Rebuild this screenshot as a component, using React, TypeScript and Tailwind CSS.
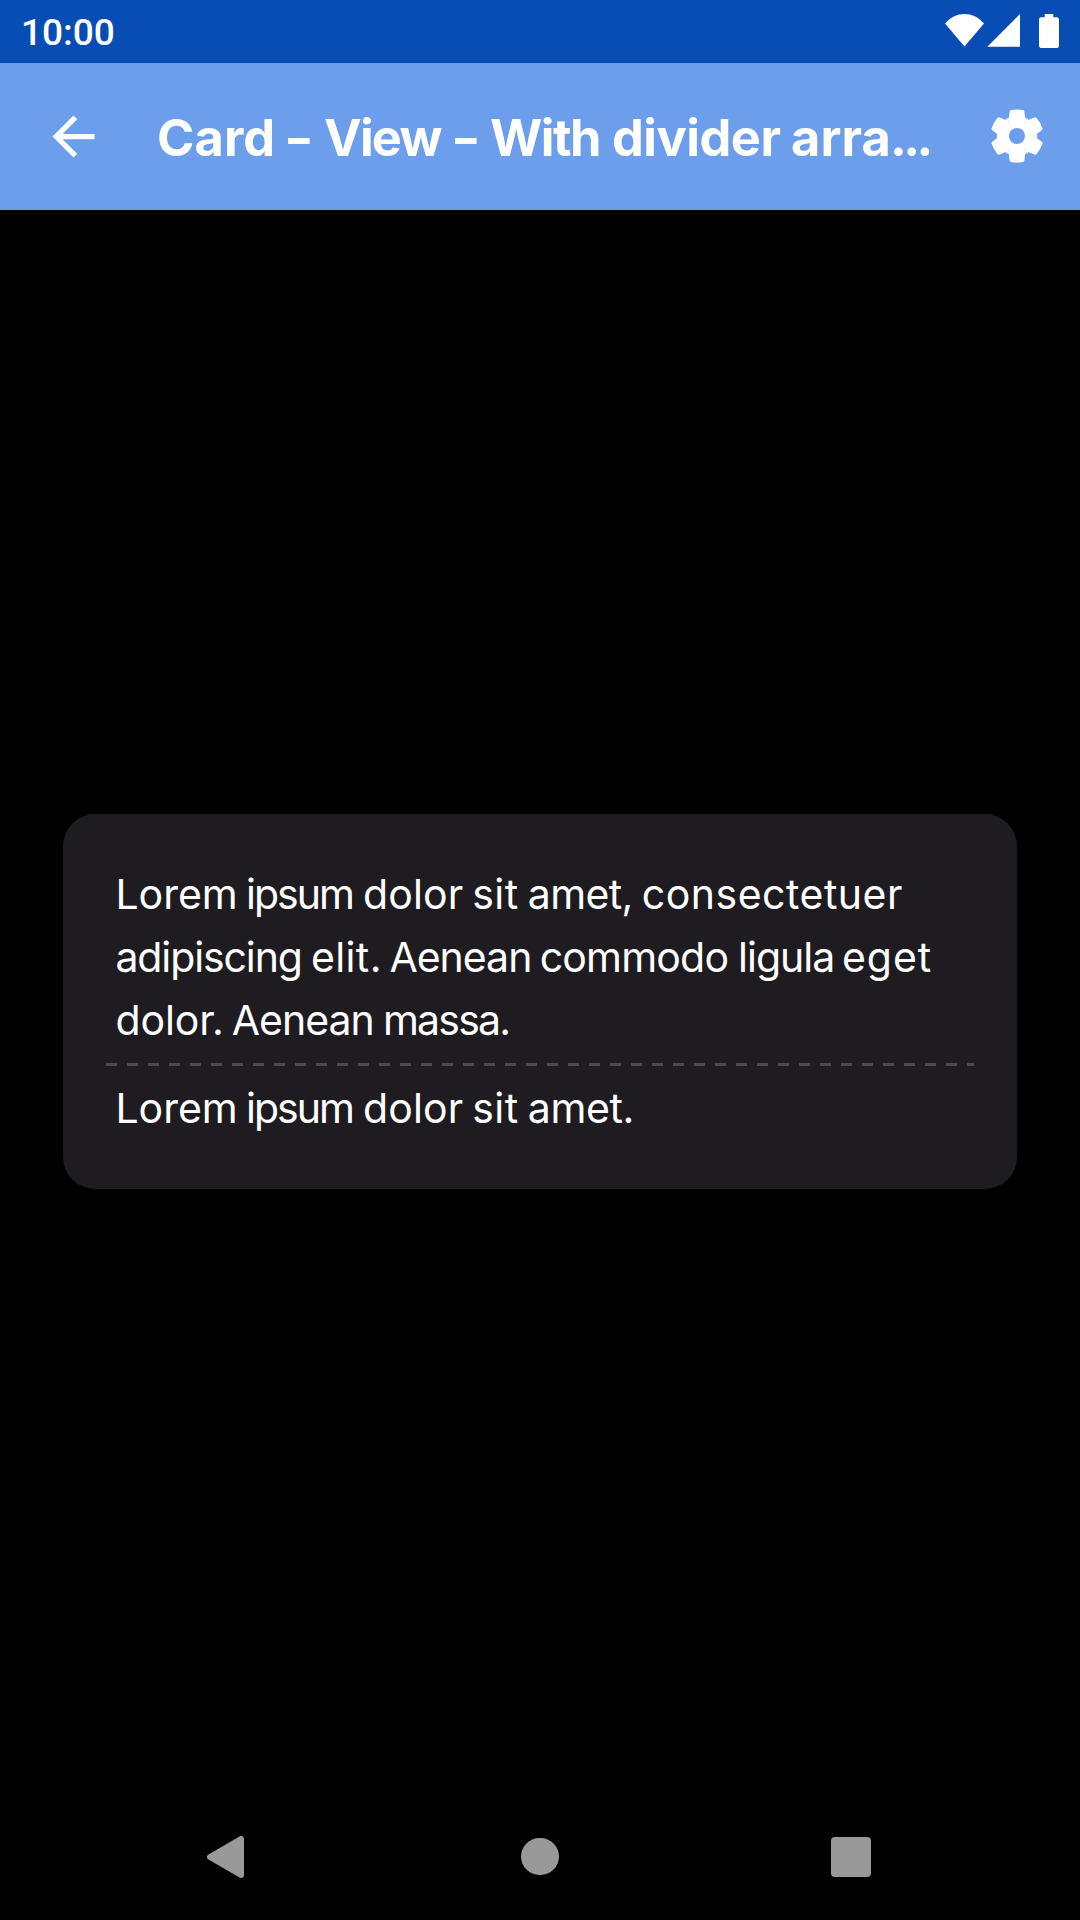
function StatusBar() {
  return (
    <div className="flex h-[63px] items-center justify-between bg-[#074db3] pl-[21px] pr-5">
      <span className="relative top-px font-['Roboto'] text-[37px] font-medium leading-none text-white">10:00</span>
      <svg className="h-[63px] w-[120px]" viewBox="940 0 120 63" fill="#fff" aria-hidden="true">
        <path d="M964.5 46.6 945 23.4A25.1 25.1 0 0 1 984 23.4Z" />
        <path d="M1020 14V46.8H987.3Z" />
        <path d="M1044.7 14h8.6v3.2h3.5a2.2 2.2 0 0 1 2.2 2.2V45.8a2.2 2.2 0 0 1-2.2 2.2H1041.2a2.2 2.2 0 0 1-2.2-2.2V19.4a2.2 2.2 0 0 1 2.2-2.2h3.5Z" />
      </svg>
    </div>
  );
}

const gearTooth =
  "M0 0L-31 -53.7C-27.5 -51.5 -24.6 -53 -24 -57L-22.3 -73Q-21.8 -77 -18 -77.7Q0 -81 18 -77.7Q21.8 -77 22.3 -73L24 -57C24.6 -53 27.5 -51.5 31 -53.7Z";

function GearIcon() {
  return (
    <svg className="h-[54px] w-[54px]" viewBox="-81 -81 162 162" fill="#fff" aria-hidden="true">
      {[0, 60, 120, 180, 240, 300].map((a) => (
        <path key={a} d={gearTooth} transform={`rotate(${a})`} />
      ))}
      <circle r="40" />
      <circle r="24" fill="#6c9eeb" />
    </svg>
  );
}

function AppBar() {
  return (
    <header className="flex h-[147px] items-center bg-[#6c9eeb] pl-[42px] pr-[36.5px]">
      <svg className="h-[63px] w-[63px]" viewBox="0 0 24 24" fill="#fff" aria-hidden="true">
        <path d="M20 11H7.83l5.59-5.59L12 4l-8 8 8 8 1.41-1.41L7.83 13H20v-2z" />
      </svg>
      <h1 className="ml-[52px] mt-[2px] flex flex-1 whitespace-pre font-['Inter'] text-[50.5px] font-[670] leading-[63px] text-white">
        <span className="w-[130px] tracking-[0.1px]">Card</span>
        <span className="w-[37px] origin-[12px_50%] scale-x-[1.28]">-</span>
        <span className="w-[129.5px] tracking-[-1.8px]">View</span>
        <span className="w-[36.5px] origin-[12px_50%] scale-x-[1.28]">-</span>
        <span className="w-[122px] tracking-[-1.6px]">With</span>
        <span className="w-[179px] tracking-[-0.5px]">divider</span>
        <span className="w-[99px] tracking-[0.1px]">arra</span>
        <span className="tracking-[-3.6px]">...</span>
      </h1>
      <div className="relative -top-px">
        <GearIcon />
      </div>
    </header>
  );
}

function Card() {
  return (
    <section className="rounded-[32px] bg-[#1e1c21] px-[43px] pb-[49px] pt-[49px]">
      <div className="pl-[9.4px] font-['Inter'] text-[41px] leading-[63px] text-white">
        <p className="flex whitespace-pre">
          <span className="w-[130.7px]">Lorem</span>
          <span className="w-[117px] tracking-[-2px]">ipsum</span>
          <span className="w-[109.2px] tracking-[0.1px]">dolor</span>
          <span className="w-[55.5px] tracking-[0.4px]">sit</span>
          <span className="w-[114px] tracking-[-0.6px]">amet,</span>
          <span className="tracking-[0.5px]">consectetuer</span>
        </p>
        <p className="flex whitespace-pre">
          <span className="w-[195.5px] tracking-[-1.1px]">adipiscing</span>
          <span className="w-[78.5px] tracking-[0.4px]">elit.</span>
          <span className="w-[150.3px] tracking-[-1px]">Aenean</span>
          <span className="w-[198.4px] tracking-[-0.8px]">commodo</span>
          <span className="w-[103.8px] tracking-[-1px]">ligula</span>
          <span className="tracking-[1px]">eget</span>
        </p>
        <p className="flex whitespace-pre">
          <span className="w-[116.4px] tracking-[-0.1px]">dolor.</span>
          <span className="w-[151.2px] tracking-[-1px]">Aenean</span>
          <span className="tracking-[-1.8px]">massa.</span>
        </p>
      </div>
      <div className="mb-[11px] mt-[11px] h-[3px] bg-[repeating-linear-gradient(90deg,#4b4a4c_0_11px,transparent_11px_21px)]" />
      <p className="flex whitespace-pre pl-[9.4px] font-['Inter'] text-[41px] leading-[63px] text-white">
        <span className="w-[130.7px]">Lorem</span>
        <span className="w-[117px] tracking-[-2px]">ipsum</span>
        <span className="w-[109.2px] tracking-[0.1px]">dolor</span>
        <span className="w-[55.5px] tracking-[0.4px]">sit</span>
        <span className="tracking-[-0.4px]">amet.</span>
      </p>
    </section>
  );
}

function NavigationBar() {
  return (
    <nav className="flex h-[127px] items-center pl-[207px]">
      <svg className="h-[42px] w-[37px]" viewBox="0 0 37 42" aria-hidden="true">
        <path d="M3 21 34 3V39Z" fill="#999" stroke="#999" strokeWidth="6" strokeLinejoin="round" />
      </svg>
      <div className="ml-[277px] h-[37.5px] w-[37.5px] rounded-full bg-[#999]" />
      <div className="ml-[272.5px] h-10 w-10 rounded-[4px] bg-[#999]" />
    </nav>
  );
}

export default function App() {
  return (
    <div className="flex h-[1920px] w-[1080px] flex-col overflow-hidden bg-black">
      <StatusBar />
      <AppBar />
      <main className="flex flex-1 flex-col justify-center px-[63px]">
        <Card />
      </main>
      <NavigationBar />
    </div>
  );
}
